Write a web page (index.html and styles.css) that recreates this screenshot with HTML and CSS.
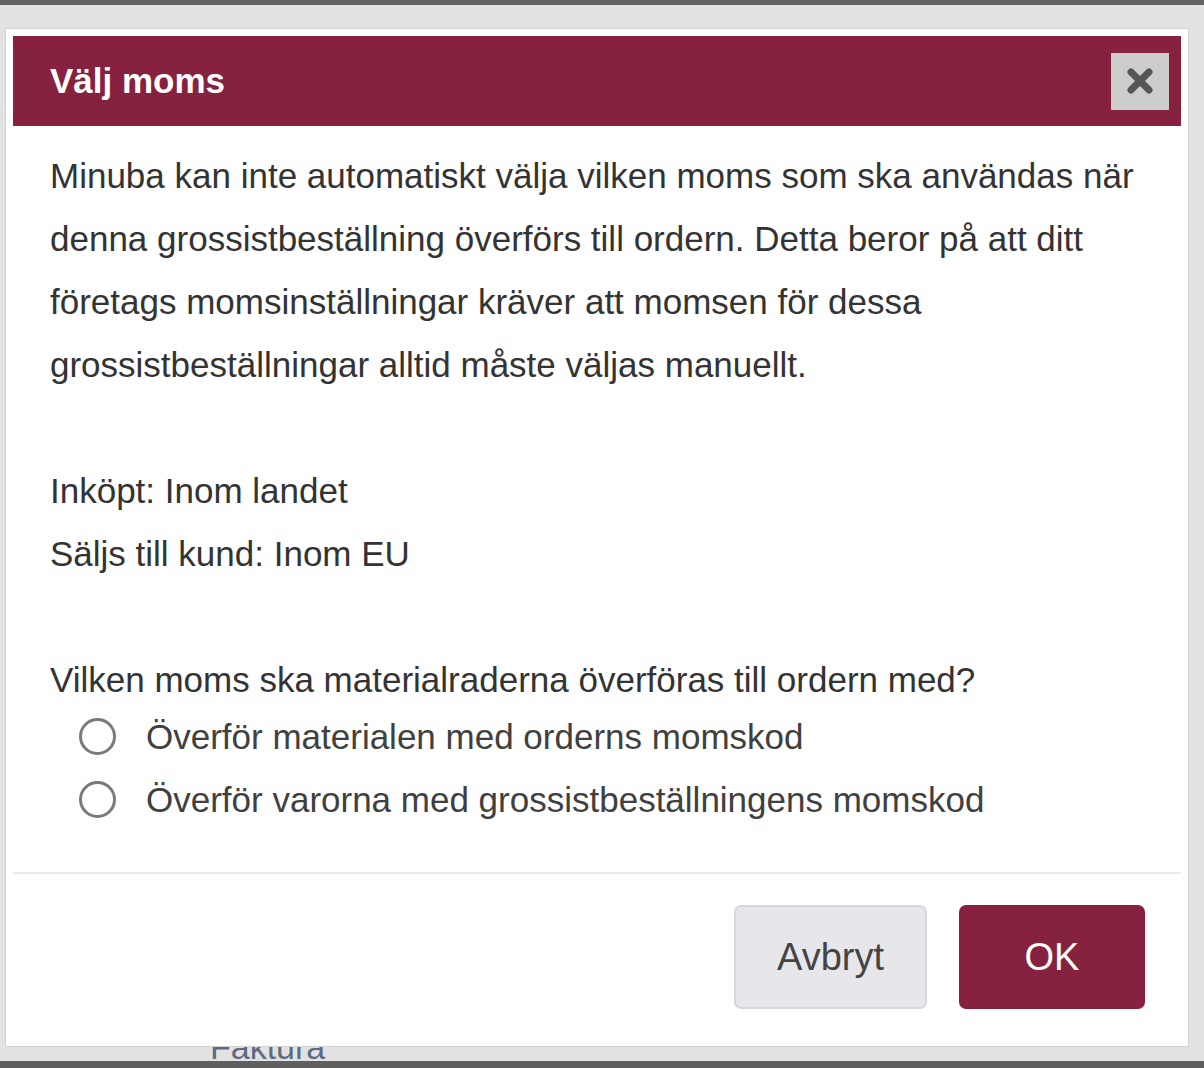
FILE: index.html
```html
<!DOCTYPE html>
<html lang="sv">
<head>
<meta charset="utf-8">
<title>Välj moms</title>
<link rel="stylesheet" href="styles.css">
</head>
<body>
<div class="topbar"></div>
<div class="page">
  <div class="behind">Faktura</div>
  <div class="dialog">
    <div class="titlebar">
      <span class="title">Välj moms</span>
      <button class="close" aria-label="Stäng">
        <svg width="30" height="30" viewBox="0 0 30 30"><path d="M6 6 L24 24 M24 6 L6 24" stroke="#555" stroke-width="7" stroke-linecap="round" fill="none"/></svg>
      </button>
    </div>
    <div class="content">
      <p>Minuba kan inte automatiskt välja vilken moms som ska användas när<br>denna grossistbeställning överförs till ordern. Detta beror på att ditt<br>företags momsinställningar kräver att momsen för dessa<br>grossistbeställningar alltid måste väljas manuellt.</p>
      <p class="gap">Inköpt: Inom landet<br>Säljs till kund: Inom EU</p>
      <p class="gap">Vilken moms ska materialraderna överföras till ordern med?</p>
      <div class="radios">
        <label class="radio"><span class="circle"></span>Överför materialen med orderns momskod</label>
        <label class="radio"><span class="circle"></span>Överför varorna med grossistbeställningens momskod</label>
      </div>
    </div>
    <div class="footer">
      <button class="btn btn-cancel">Avbryt</button>
      <button class="btn btn-ok">OK</button>
    </div>
  </div>
</div>
<div class="bottombar"></div>
</body>
</html>
```
FILE: styles.css
```css
html, body {
  margin: 0;
  padding: 0;
  height: 100%;
}
body {
  background: #e2e2e2;
  font-family: "Liberation Sans", Arial, sans-serif;
  display: flex;
  flex-direction: column;
  overflow: hidden;
}
.topbar {
  height: 5px;
  background: #646464;
  flex: none;
}
.bottombar {
  height: 7px;
  background: #5f5f5f;
  flex: none;
}
.page {
  flex: 1;
  position: relative;
  padding: 23px 15px 0 5px;
  box-sizing: border-box;
}
.behind {
  position: absolute;
  left: 210px;
  top: 1023px;
  font-size: 34px;
  color: #5b6b82;
}
.dialog {
  position: relative;
  background: #fff;
  border: 1px solid #d2d2d2;
  padding: 7px;
  height: 1019px;
  box-sizing: border-box;
  display: flex;
  flex-direction: column;
}
.titlebar {
  height: 90px;
  background: #86223f;
  display: flex;
  align-items: center;
  justify-content: space-between;
  padding: 0 12px 0 37px;
  flex: none;
}
.title {
  color: #fff;
  font-weight: bold;
  font-size: 35px;
}
.close {
  width: 58px;
  height: 57px;
  background: #cdcdcd;
  border: none;
  padding: 0;
  display: flex;
  align-items: center;
  justify-content: center;
}
.content {
  padding: 18px 37px 0 37px;
  font-size: 35px;
  line-height: 63px;
  color: #333;
  flex: 1;
}
.content p {
  margin: 0;
}
.content p.gap {
  margin-top: 63px;
}
.radios {
  margin-top: -6px;
}
.radio {
  display: flex;
  align-items: center;
  height: 63px;
  padding-left: 29px;
  color: #404040;
}
.circle {
  width: 31px;
  height: 31px;
  border: 3px solid #7a7a7a;
  border-radius: 50%;
  margin-right: 30px;
  flex: none;
}
.footer {
  border-top: 2px solid #ebebeb;
  display: flex;
  justify-content: flex-end;
  gap: 32px;
  padding: 31px 36px 30px 0;
  flex: none;
}
.btn {
  font-family: "Liberation Sans", Arial, sans-serif;
  font-size: 38px;
  border-radius: 7px;
  height: 104px;
  cursor: pointer;
}
.btn-cancel {
  width: 193px;
  background: #e7e7eb;
  border: 2px solid #d8d8dc;
  color: #444;
}
.btn-ok {
  width: 186px;
  background: #86223f;
  border: none;
  color: #fff;
}
```
